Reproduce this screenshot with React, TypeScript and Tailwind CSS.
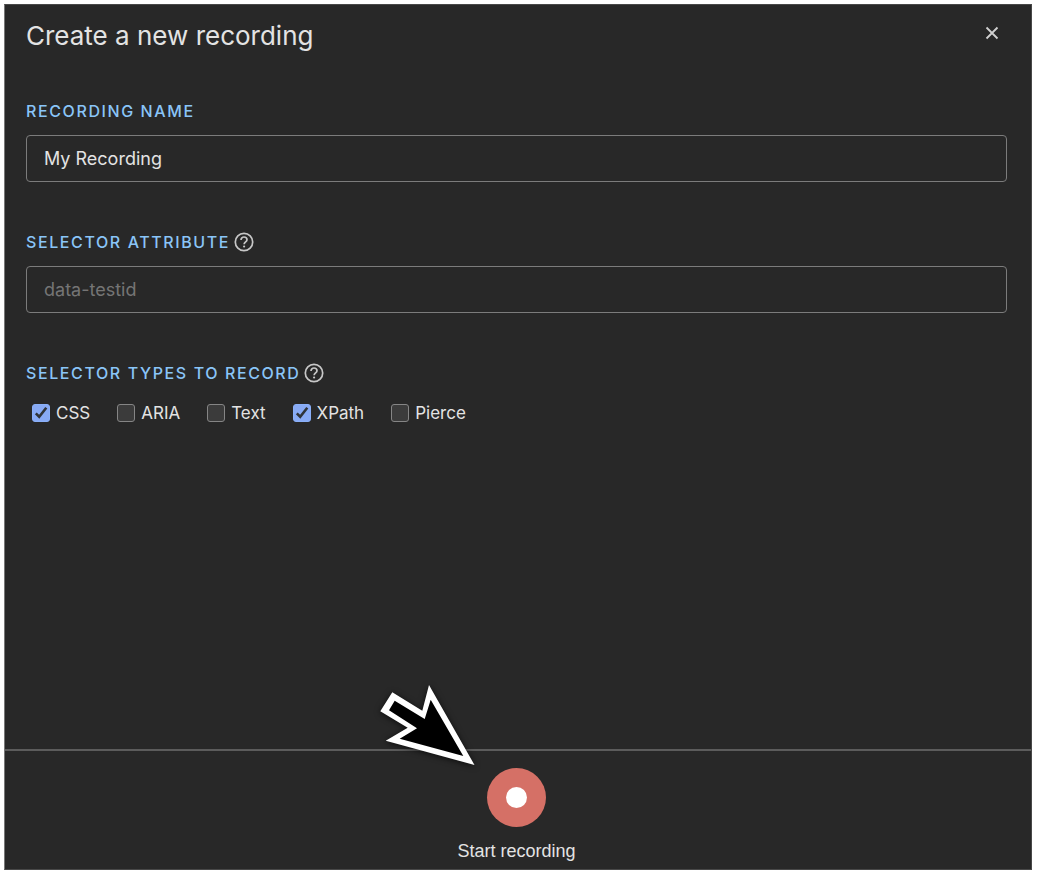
import React, { useState } from "react";

const selectorTypes = [
  { id: "css", label: "CSS", checked: true },
  { id: "aria", label: "ARIA", checked: false },
  { id: "text", label: "Text", checked: false },
  { id: "xpath", label: "XPath", checked: true },
  { id: "pierce", label: "Pierce", checked: false },
];

const labelClass = "text-base leading-6 font-medium uppercase tracking-widest text-[#8ac5f8]";
const inputClass =
  "block h-[47px] w-full rounded border border-[#7c7c7c] bg-[#282828] px-[17px] text-lg text-[#e3e3e3] outline-none placeholder:text-[#757575] placeholder:opacity-100";

function HelpButton({ label }: { label: string }) {
  return (
    <button type="button" aria-label={label} className="text-[#c7c7c7]">
      <svg width="20" height="20" viewBox="0 0 20 20" fill="none" stroke="currentColor" strokeWidth="1.7">
        <circle cx="10" cy="10" r="8.7" />
        <path d="M7 8.1c0-1.9 1.3-3.1 3-3.1s3 1.2 3 2.8c0 2-2.9 2.2-2.9 4.4" />
        <circle cx="10.1" cy="14.5" r="1.1" fill="currentColor" stroke="none" />
      </svg>
    </button>
  );
}

function SelectorCheckbox({ id, label, defaultChecked }: { id: string; label: string; defaultChecked: boolean }) {
  return (
    <label htmlFor={id} className="flex items-center gap-1.5 text-[17px] leading-6">
      <span className="grid size-[18px]">
        <input
          id={id}
          type="checkbox"
          defaultChecked={defaultChecked}
          className="peer col-start-1 row-start-1 size-[18px] appearance-none rounded-[3px] border border-[#858585] bg-[#3b3b3b] checked:border-[#8ab0f9] checked:bg-[#88aaf4]"
        />
        <svg
          viewBox="0 0 18 18"
          fill="none"
          stroke="#303439"
          strokeWidth="2.6"
          className="pointer-events-none invisible col-start-1 row-start-1 size-[18px] peer-checked:visible"
        >
          <path d="M3.8 9.4 7.2 12.7 14.3 3.8" />
        </svg>
      </span>
      {label}
    </label>
  );
}

function Pointer() {
  return (
    <svg
      aria-hidden="true"
      width="96"
      height="82"
      viewBox="379 684 96 82"
      className="pointer-events-none absolute right-full bottom-full mr-3 mb-0.5 max-w-none overflow-visible drop-shadow-[0_1px_3px_rgba(0,0,0,0.7)]"
    >
      <path fill="#fff" d="M474.5 765 429 685 422.3 710.7 392.3 692.3 380.3 711.3 407.7 727.7 385.7 740.7Z" />
      <path fill="#000" d="M463.3 756 430.7 699.7 424.7 719 394.7 700.7 389 710.3 417 728.3 399.7 738.7Z" />
    </svg>
  );
}

export default function App() {
  const [name, setName] = useState("My Recording");

  return (
    <div className="flex min-h-screen bg-white pt-1 pr-1.5 pb-1.5 pl-1 font-['Inter',sans-serif]">
      <main className="flex min-w-0 flex-1 flex-col border border-t-[#484848] border-r-[#484848] border-b-[#484848] border-l-[#777] bg-[#282828] text-[#e3e3e3]">
        <header className="flex items-start justify-between pt-[11px] pr-8 pl-[21px]">
          <h1 className="text-[26px] leading-10">Create a new recording</h1>
          <button type="button" aria-label="Close" className="mt-2.5 text-[#d0d0d0]">
            <svg width="14" height="14" viewBox="0 0 14 14" fill="none" stroke="currentColor" strokeWidth="1.8">
              <path d="M1.5 1.5 12.5 12.5M12.5 1.5 1.5 12.5" />
            </svg>
          </button>
        </header>

        <form className="flex flex-1 flex-col gap-12 pt-[43px] pr-6 pb-8 pl-[21px]">
          <div>
            <label htmlFor="recording-name" className={`mb-3 block ${labelClass}`}>
              Recording name
            </label>
            <input
              id="recording-name"
              type="text"
              value={name}
              onChange={(event) => setName(event.target.value)}
              className={inputClass}
            />
          </div>

          <div>
            <div className="mb-3 flex items-center gap-1">
              <label htmlFor="selector-attribute" className={labelClass}>
                Selector attribute
              </label>
              <HelpButton label="About selector attribute" />
            </div>
            <input id="selector-attribute" type="text" placeholder="data-testid" className={inputClass} />
          </div>

          <fieldset>
            <div className="mb-4 flex items-center gap-1">
              <legend className={labelClass}>Selector types to record</legend>
              <HelpButton label="About selector types" />
            </div>
            <div className="flex flex-wrap gap-x-[27px] gap-y-2 pl-1.5">
              {selectorTypes.map((type) => (
                <SelectorCheckbox key={type.id} id={type.id} label={type.label} defaultChecked={type.checked} />
              ))}
            </div>
          </fieldset>
        </form>

        <footer className="flex flex-col items-center border-t-2 border-[#5c5c5c] pt-[17px] pr-[3px] pb-1.5 font-['Liberation_Sans',Arial,sans-serif]">
          <div className="relative">
            <button
              type="button"
              aria-labelledby="start-label"
              className="flex size-[59px] items-center justify-center rounded-full bg-[#d57066]"
            >
              <span className="size-[21px] rounded-full bg-white" />
            </button>
            <Pointer />
          </div>
          <span id="start-label" className="mt-3 text-lg leading-6">
            Start recording
          </span>
        </footer>
      </main>
    </div>
  );
}
